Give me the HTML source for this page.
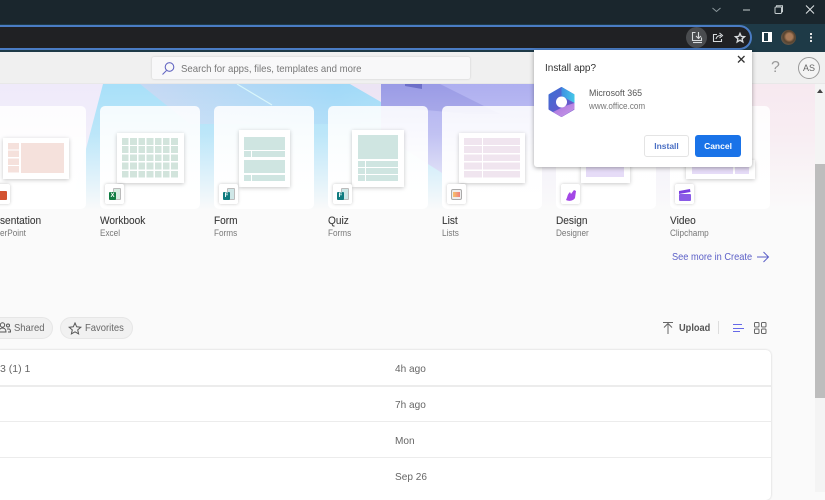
<!DOCTYPE html>
<html><head><meta charset="utf-8">
<style>
*{box-sizing:border-box;margin:0;padding:0}
html,body{width:825px;height:492px;overflow:hidden;background:#fafafa;font-family:"Liberation Sans",sans-serif}
.a{position:absolute}
.card{position:absolute;top:106px;width:100px;height:103px;border-radius:5px;background:linear-gradient(rgba(255,255,255,.86),rgba(255,255,255,.97) 70%,#fff)}
.doc{position:absolute;background:#fff;box-shadow:0 1px 4px rgba(0,0,0,.22)}
.doc i{position:absolute;display:block}
.badge{position:absolute;top:184px;width:19px;height:20px;background:#fff;border-radius:2px;box-shadow:0 0 3px rgba(0,0,0,.22)}
.t{position:absolute;top:215px;font-size:11px;color:#3a3a3a;line-height:13px;white-space:nowrap;transform:scaleX(.92);transform-origin:left;-webkit-text-stroke:.1px #3a3a3a}
.s{position:absolute;top:228px;font-size:9px;color:#777;line-height:11px;white-space:nowrap;transform:scaleX(.91);transform-origin:left}
.when{position:absolute;left:395px;font-size:10.5px;color:#666;line-height:12px;transform:scaleX(.96);transform-origin:left}
.line{position:absolute;left:0;width:771px;height:1px;background:#ececec}
.pill{position:absolute;top:317px;height:22px;border:1px solid #e6e6e6;background:#f1f1f1;border-radius:11px}
.pt{position:absolute;top:322px;font-size:10.5px;color:#666;line-height:13px;white-space:nowrap;transform:scaleX(.9);transform-origin:left}
.ic{position:absolute;width:7px;height:8px;border-radius:1px;color:#fff;font-size:6px;font-weight:bold;line-height:8px;text-align:center}
.dc{position:absolute;top:188px;width:8px;height:12px;border:1px solid #bbb;border-radius:1px}
</style></head><body>

<div class="a" style="left:0;top:0;width:825px;height:24px;background:#1a262d"></div>
<div class="a" style="left:0;top:24px;width:825px;height:28px;background:#1e3a47"></div>
<div class="a" style="left:-30px;top:25px;width:782px;height:25px;background:#202124;border:2px solid #4a7cc4;border-radius:13px"></div>

<svg class="a" style="left:700px;top:0" width="125" height="20" fill="none" stroke="#c6cdd0" stroke-width="1">
<path d="M12.500 8l4 3.500 4-3.500" stroke="#8b979c"/>
<path d="M43 10h7"/>
<rect x="75" y="7" width="6.500" height="6.500" rx="1"/><path d="M76.500 7V5.800h6v6H81.500"/>
<path d="M106 5.500l8 8M114 5.500l-8 8" stroke="#dfe3e5"/>
</svg>

<div class="a" style="left:686px;top:27px;width:21px;height:21px;border-radius:50%;background:#4a4c4f"></div>
<svg class="a" style="left:686px;top:27px" width="70" height="22" fill="none" stroke="#d8dbdd" stroke-width="1.100">
<path d="M9.500 5.500H6.500v8h9v-3"/><path d="M12.500 5v6M10 9l2.500 2.500L15 9"/><path d="M7 15.500h9"/>
<path d="M31 7.500h-3.500v7h8v-2.500"/><path d="M30 12c.5-2.500 2.500-3.500 5-3.500M33.500 6l3 2.500-3 2.500"/>
<path d="M54 6.500l1.300 2.900 3.200.3-2.400 2.100.7 3.100-2.800-1.700-2.800 1.700.7-3.100-2.400-2.100 3.200-.3z" stroke-width="1.400"/>
</svg>
<div class="a" style="left:762px;top:32px;width:10px;height:10px;background:#fff;border:1px solid #fff"><div style="position:absolute;left:1px;top:0;width:4px;height:8px;background:#1e3a47"></div></div>
<div class="a" style="left:781px;top:30px;width:15px;height:15px;border-radius:50%;background:radial-gradient(circle at 55% 45%,#a87a58 0 28%,#57432f 48%,#7c7268 100%)"></div>
<div class="a" style="left:810px;top:33px;width:2px;height:2px;background:#e6e6e6;box-shadow:0 3.500px 0 #e6e6e6,0 7px 0 #e6e6e6"></div>

<div class="a" style="left:0;top:52px;width:825px;height:32px;background:#f0f0f0;border-bottom:1px solid #e8e8e8"></div>
<div class="a" style="left:152px;top:57px;width:318px;height:22px;background:#f8f8f9;border-radius:2px;box-shadow:0 0 2px rgba(0,0,0,.15)"></div>
<svg class="a" style="left:161px;top:61px" width="15" height="15" fill="none" stroke="#6467c2" stroke-width="1.100"><circle cx="8.500" cy="6" r="4.300"/><path d="M5.500 9.500L1.500 13.500"/></svg>
<div class="a" style="left:181px;top:63px;font-size:10.500px;color:#777;line-height:13px;white-space:nowrap;transform:scaleX(.915);transform-origin:left">Search for apps, files, templates and more</div>
<div class="a" style="left:771px;top:59px;font-size:16px;color:#999;line-height:18px">?</div>
<div class="a" style="left:798px;top:57px;width:22px;height:22px;border:1px solid #999;border-radius:50%;font-size:9px;color:#666;text-align:center;line-height:20px;background:#f4f4f4">AS</div>

<svg class="a" style="left:0;top:84px" width="815" height="126">
<defs>
<linearGradient id="fade" x1="0" y1="0" x2="0" y2="1"><stop offset="0" stop-color="#fafafa" stop-opacity="0"/><stop offset=".4" stop-color="#fafafa" stop-opacity=".25"/><stop offset="1" stop-color="#fafafa"/></linearGradient>
<linearGradient id="blue" x1="0" y1="0" x2="1" y2="0"><stop offset="0" stop-color="#c6d8f3"/><stop offset=".75" stop-color="#a0d8f8"/><stop offset="1" stop-color="#a4def8"/></linearGradient>
</defs>
<rect width="815" height="126" fill="#efeafa"/>
<path d="M103 0H350L480 80V126H70z" fill="#a8e0f9"/>
<path d="M140 0H350L400 28 380 40H190z" fill="url(#blue)"/>
<path d="M350 0H381V18z" fill="#ece4f4"/>
<path d="M381 0H540V126H500L381 50z" fill="#aeaff0"/>
<path d="M381 0H440L500 30H470L381 22z" fill="#9a9be6"/>
<path d="M405 0H422V5L405 2z" fill="#6c6ec8"/>
<path d="M237 0l35 21" stroke="#d8f6fb" stroke-width="1.200"/>
<rect x="752" width="63" height="126" fill="#f7e9f0"/>
<rect width="815" height="126" fill="url(#fade)"/>
</svg>
<div class="a" style="left:815px;top:84px;width:10px;height:408px;background:#f4f4f4"></div>
<div class="a" style="left:817px;top:89px;border:3px solid transparent;border-bottom:4px solid #444;border-top:0"></div>
<div class="a" style="left:815px;top:164px;width:10px;height:234px;background:#bdbdbd"></div>

<!-- cards -->
<div class="card" style="left:-14px"></div>
<div class="doc" style="left:3px;top:138px;width:66px;height:41px"><i style="left:5px;top:5px;width:11px;height:30px;background:repeating-linear-gradient(#f5e1dc 0 6.400px,#fff 6.400px 7.700px)"></i><i style="left:18px;top:5px;width:43px;height:30px;background:#f5e1dc"></i></div>
<div class="badge" style="left:-9px"></div>
<div class="a" style="left:0;top:191px;width:7px;height:9px;background:#d35230;border-radius:0 1px 1px 0"></div>
<div class="t" style="left:0">sentation</div><div class="s" style="left:0">erPoint</div>

<div class="card" style="left:100px"></div>
<div class="doc" style="left:117px;top:133px;width:67px;height:50px"><i style="left:5px;top:5px;width:56px;height:40px;background:repeating-linear-gradient(90deg,transparent 0 6.700px,#fff 6.700px 8.200px),repeating-linear-gradient(#d2e4dc 0 6.800px,#fff 6.800px 8.200px)"></i></div>
<div class="badge" style="left:105px"></div>
<div class="dc" style="left:113px;background:#d6ebe0"></div>
<div class="ic" style="left:109px;top:192px;background:#107c41">X</div>
<div class="t" style="left:100px">Workbook</div><div class="s" style="left:100px">Excel</div>

<div class="card" style="left:214px"></div>
<div class="doc" style="left:239px;top:130px;width:51px;height:57px"><i style="left:5px;top:7px;width:41px;height:13px;background:#cfe5e1"></i><i style="left:5px;top:21px;width:7px;height:6px;background:#cfe5e1"></i><i style="left:13px;top:21px;width:33px;height:6px;background:#cfe5e1"></i><i style="left:5px;top:30px;width:41px;height:13px;background:#cfe5e1"></i><i style="left:5px;top:45px;width:7px;height:6px;background:#cfe5e1"></i><i style="left:13px;top:45px;width:33px;height:6px;background:#cfe5e1"></i></div>
<div class="badge" style="left:219px"></div>
<div class="dc" style="left:227px;background:#cfe7e7"></div>
<div class="ic" style="left:223px;top:192px;background:#0f7b7f">F</div>
<div class="t" style="left:214px">Form</div><div class="s" style="left:214px">Forms</div>

<div class="card" style="left:328px"></div>
<div class="doc" style="left:352px;top:130px;width:52px;height:57px"><i style="left:6px;top:5px;width:40px;height:24px;background:#cfe5e1"></i><i style="left:6px;top:31px;width:7px;height:6px;background:#cfe5e1"></i><i style="left:14px;top:31px;width:32px;height:6px;background:#cfe5e1"></i><i style="left:6px;top:38px;width:7px;height:6px;background:#cfe5e1"></i><i style="left:14px;top:38px;width:32px;height:6px;background:#cfe5e1"></i><i style="left:6px;top:45px;width:7px;height:6px;background:#cfe5e1"></i><i style="left:14px;top:45px;width:32px;height:6px;background:#cfe5e1"></i></div>
<div class="badge" style="left:333px"></div>
<div class="dc" style="left:341px;background:#cfe7e7"></div>
<div class="ic" style="left:337px;top:192px;background:#0f7b7f">F</div>
<div class="t" style="left:328px">Quiz</div><div class="s" style="left:328px">Forms</div>

<div class="card" style="left:442px"></div>
<div class="doc" style="left:459px;top:133px;width:66px;height:50px"><i style="left:5px;top:5px;width:18px;height:40px;background:repeating-linear-gradient(#f0e5ef 0 6.800px,#fff 6.800px 8.200px)"></i><i style="left:24px;top:5px;width:37px;height:40px;background:repeating-linear-gradient(#f0e5ef 0 6.800px,#fff 6.800px 8.200px)"></i></div>
<div class="badge" style="left:447px"></div>
<div class="a" style="left:451px;top:189px;width:11px;height:11px;border:1px solid #aaa;border-radius:2px;background:#eee"><div style="position:absolute;left:1px;top:2px;width:7px;height:5px;background:linear-gradient(90deg,#f7c36a,#ee7f7f)"></div></div>
<div class="t" style="left:442px">List</div><div class="s" style="left:442px">Lists</div>

<div class="card" style="left:556px"></div>
<div class="doc" style="left:581px;top:160px;width:49px;height:23px"><i style="left:5px;top:3px;width:38px;height:14px;background:#e6dcf7"></i></div>
<div class="badge" style="left:561px"></div>
<svg class="a" style="left:564px;top:188px" width="14" height="14"><path d="M2 12c2-4 1-5 4-8l1 2 3-4 2 1-1 7c-1 2-5 4-9 2z" fill="#a347e6"/></svg>
<div class="t" style="left:556px">Design</div><div class="s" style="left:556px">Designer</div>

<div class="card" style="left:670px"></div>
<div class="doc" style="left:686px;top:160px;width:69px;height:19px"><i style="left:6px;top:3px;width:41px;height:11px;background:#e6dcf7"></i><i style="left:49px;top:3px;width:14px;height:11px;background:#e6dcf7"></i></div>
<div class="badge" style="left:675px"></div>
<svg class="a" style="left:678px;top:188px" width="14" height="14"><path d="M1 3l11-2 .5 3-11.500 2z" fill="#7b3fe0"/><rect x="1" y="6" width="12" height="7" rx="1" fill="#8a5be6"/></svg>
<div class="t" style="left:670px">Video</div><div class="s" style="left:670px">Clipchamp</div>

<div class="a" style="left:672px;top:251px;font-size:10.500px;color:#5b5fc7;line-height:13px;white-space:nowrap;transform:scaleX(.88);transform-origin:left">See more in Create</div>
<svg class="a" style="left:756px;top:250px" width="14" height="14" fill="none" stroke="#5b5fc7"><path d="M1 7h11M7.500 2L12.500 7l-5 5"/></svg>

<div class="pill" style="left:-20px;width:73px"></div>
<div class="pt" style="left:14px">Shared</div>
<svg class="a" style="left:0;top:321px" width="11" height="13" fill="none" stroke="#555"><circle cx="2.500" cy="4" r="2.200"/><path d="M-1 11c0-3 2-4 3.500-4s3.500 1 3.500 4z"/><circle cx="8" cy="4.500" r="1.500"/><path d="M7 8h2c1 0 1.500 1 1.500 3H8"/></svg>
<div class="pill" style="left:60px;width:73px"></div>
<div class="pt" style="left:85px">Favorites</div>
<svg class="a" style="left:68px;top:322px" width="14" height="13" fill="none" stroke="#555"><path d="M7 1l1.700 3.800 4.100.4-3.100 2.700.9 4L7 9.800l-3.600 2.100.9-4-3.100-2.700 4.100-.4z"/></svg>

<svg class="a" style="left:662px;top:321px" width="12" height="14" fill="none" stroke="#666"><path d="M1 1.500h10M6 13V2.500M2 6.500l4-4 4 4"/></svg>
<div class="a" style="left:679px;top:322px;font-size:10.500px;font-weight:bold;color:#555;line-height:13px;transform:scaleX(.88);transform-origin:left">Upload</div>
<div class="a" style="left:718px;top:321px;width:1px;height:13px;background:#ddd"></div>
<div class="a" style="left:733px;top:324px;width:9px;height:1px;background:#6669e8"></div>
<div class="a" style="left:733px;top:328px;width:11px;height:1px;background:#6669e8"></div>
<div class="a" style="left:733px;top:331px;width:7px;height:1px;background:#6669e8"></div>
<svg class="a" style="left:754px;top:322px" width="13" height="13" fill="none" stroke="#666"><rect x=".5" y=".5" width="4.500" height="4.500" rx="1"/><rect x="7.500" y=".5" width="4.500" height="4.500" rx="1"/><rect x=".5" y="7" width="4.500" height="4.500" rx="1"/><rect x="7.500" y="7" width="4.500" height="4.500" rx="1"/></svg>

<div class="a" style="left:-5px;top:350px;width:776px;height:150px;background:#fff;border-radius:5px;box-shadow:0 0 2px rgba(0,0,0,.18)"></div>
<div class="line" style="top:385px;height:1.500px"></div>
<div class="line" style="top:421px"></div>
<div class="line" style="top:457px"></div>
<div class="a" style="left:0;top:363px;font-size:10.500px;color:#666;line-height:12px">3 (1) 1</div>
<div class="when" style="top:363px">4h ago</div>
<div class="when" style="top:399px">7h ago</div>
<div class="when" style="top:435px">Mon</div>
<div class="when" style="top:471px">Sep 26</div>

<!-- popup -->
<div class="a" style="left:534px;top:50px;width:218px;height:117px;background:#fff;border-radius:0 0 3px 3px;box-shadow:0 1px 5px rgba(0,0,0,.35)"></div>
<svg class="a" style="left:737px;top:55px" width="9" height="9" stroke="#333" stroke-width="1.300"><path d="M1 1l6.500 6.500M7.500 1L1 7.500"/></svg>
<div class="a" style="left:545px;top:62px;font-size:10.500px;color:#333;line-height:13px;transform:scaleX(.95);transform-origin:left">Install app?</div>
<svg class="a" style="left:546px;top:86px" width="32" height="32">
<defs>
<linearGradient id="m1" x1="0" y1="0" x2="1" y2="1"><stop offset="0" stop-color="#3a6fd4"/><stop offset="1" stop-color="#7a4fc9"/></linearGradient>
<linearGradient id="m2" x1="0" y1="0" x2="1" y2="0"><stop offset="0" stop-color="#3e8fe2"/><stop offset="1" stop-color="#44c9e8"/></linearGradient>
<linearGradient id="m3" x1="0" y1="0" x2="1" y2="1"><stop offset="0" stop-color="#a96fdc"/><stop offset="1" stop-color="#c79be8"/></linearGradient>
</defs>
<path d="M15.500 2L27.500 9V23L15.500 30 3.500 23V9z" fill="url(#m1)" stroke="url(#m1)" stroke-width="2" stroke-linejoin="round"/>
<path d="M15.500 1L28.500 8.500V17L15.500 10z" fill="url(#m2)"/>
<path d="M28.500 17V23L15.500 31 7 26l12-6z" fill="url(#m3)"/>
<circle cx="15.500" cy="16" r="5.500" fill="#fff"/>
</svg>
<div class="a" style="left:589px;top:88px;font-size:9.500px;color:#555;line-height:11px;transform:scaleX(.93);transform-origin:left;white-space:nowrap">Microsoft 365</div>
<div class="a" style="left:589px;top:101px;font-size:9px;color:#777;line-height:11px;transform:scaleX(.9);transform-origin:left;white-space:nowrap">www.office.com</div>
<div class="a" style="left:644px;top:135px;width:45px;height:22px;border:1px solid #e4e4e4;border-radius:3px;background:#fff;color:#4a6fc4;font-size:8.500px;font-weight:bold;text-align:center;line-height:20px">Install</div>
<div class="a" style="left:695px;top:135px;width:46px;height:22px;border-radius:3px;background:#1a73e8;color:#fff;font-size:8.500px;font-weight:bold;text-align:center;line-height:22px">Cancel</div>
</body></html>
